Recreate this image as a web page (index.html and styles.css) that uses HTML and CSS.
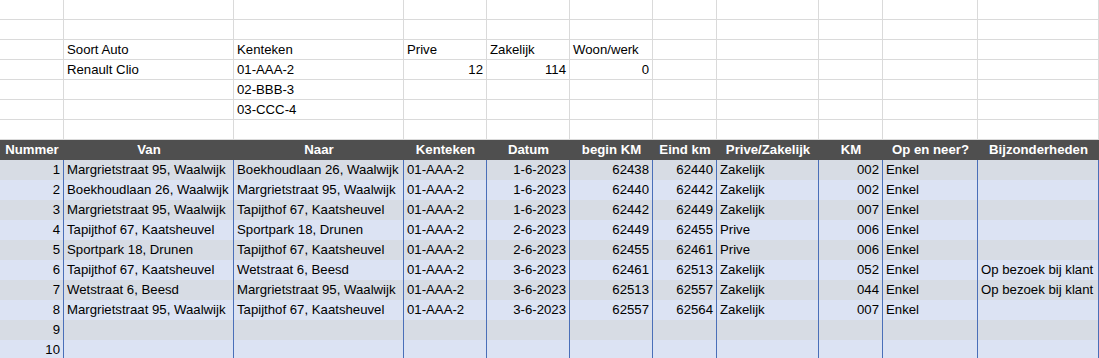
FILE: index.html
```html
<!DOCTYPE html>
<html lang="nl">
<head>
<meta charset="utf-8">
<title>Rittenregistratie</title>
<link rel="stylesheet" href="styles.css">
</head>
<body>
<div class="sheet">
  <div class="row grid"><div></div><div></div><div></div><div></div><div></div><div></div><div></div><div></div><div></div><div></div><div></div></div>
  <div class="row grid"><div></div><div></div><div></div><div></div><div></div><div></div><div></div><div></div><div></div><div></div><div></div></div>
  <div class="row grid"><div></div><div>Soort Auto</div><div>Kenteken</div><div>Prive</div><div>Zakelijk</div><div>Woon/werk</div><div></div><div></div><div></div><div></div><div></div></div>
  <div class="row grid"><div></div><div>Renault Clio</div><div>01-AAA-2</div><div class="num">12</div><div class="num">114</div><div class="num">0</div><div></div><div></div><div></div><div></div><div></div></div>
  <div class="row grid"><div></div><div></div><div>02-BBB-3</div><div></div><div></div><div></div><div></div><div></div><div></div><div></div><div></div></div>
  <div class="row grid"><div></div><div></div><div>03-CCC-4</div><div></div><div></div><div></div><div></div><div></div><div></div><div></div><div></div></div>
  <div class="row grid"><div></div><div></div><div></div><div></div><div></div><div></div><div></div><div></div><div></div><div></div><div></div></div>

  <div class="row head"><div>Nummer</div><div>Van</div><div>Naar</div><div>Kenteken</div><div>Datum</div><div>begin KM</div><div>Eind km</div><div>Prive/Zakelijk</div><div>KM</div><div>Op en neer?</div><div>Bijzonderheden</div></div>

  <div class="row data odd"><div class="num">1</div><div>Margrietstraat 95, Waalwijk</div><div>Boekhoudlaan 26, Waalwijk</div><div>01-AAA-2</div><div class="num">1-6-2023</div><div class="num">62438</div><div class="num">62440</div><div>Zakelijk</div><div class="num">002</div><div>Enkel</div><div></div></div>
  <div class="row data even"><div class="num">2</div><div>Boekhoudlaan 26, Waalwijk</div><div>Margrietstraat 95, Waalwijk</div><div>01-AAA-2</div><div class="num">1-6-2023</div><div class="num">62440</div><div class="num">62442</div><div>Zakelijk</div><div class="num">002</div><div>Enkel</div><div></div></div>
  <div class="row data odd"><div class="num">3</div><div>Margrietstraat 95, Waalwijk</div><div>Tapijthof 67, Kaatsheuvel</div><div>01-AAA-2</div><div class="num">1-6-2023</div><div class="num">62442</div><div class="num">62449</div><div>Zakelijk</div><div class="num">007</div><div>Enkel</div><div></div></div>
  <div class="row data even"><div class="num">4</div><div>Tapijthof 67, Kaatsheuvel</div><div>Sportpark 18, Drunen</div><div>01-AAA-2</div><div class="num">2-6-2023</div><div class="num">62449</div><div class="num">62455</div><div>Prive</div><div class="num">006</div><div>Enkel</div><div></div></div>
  <div class="row data odd"><div class="num">5</div><div>Sportpark 18, Drunen</div><div>Tapijthof 67, Kaatsheuvel</div><div>01-AAA-2</div><div class="num">2-6-2023</div><div class="num">62455</div><div class="num">62461</div><div>Prive</div><div class="num">006</div><div>Enkel</div><div></div></div>
  <div class="row data even"><div class="num">6</div><div>Tapijthof 67, Kaatsheuvel</div><div>Wetstraat 6, Beesd</div><div>01-AAA-2</div><div class="num">3-6-2023</div><div class="num">62461</div><div class="num">62513</div><div>Zakelijk</div><div class="num">052</div><div>Enkel</div><div>Op bezoek bij klant</div></div>
  <div class="row data odd"><div class="num">7</div><div>Wetstraat 6, Beesd</div><div>Margrietstraat 95, Waalwijk</div><div>01-AAA-2</div><div class="num">3-6-2023</div><div class="num">62513</div><div class="num">62557</div><div>Zakelijk</div><div class="num">044</div><div>Enkel</div><div>Op bezoek bij klant</div></div>
  <div class="row data even"><div class="num">8</div><div>Margrietstraat 95, Waalwijk</div><div>Tapijthof 67, Kaatsheuvel</div><div>01-AAA-2</div><div class="num">3-6-2023</div><div class="num">62557</div><div class="num">62564</div><div>Zakelijk</div><div class="num">007</div><div>Enkel</div><div></div></div>
  <div class="row data odd"><div class="num">9</div><div></div><div></div><div></div><div></div><div></div><div></div><div></div><div></div><div></div><div></div></div>
  <div class="row data even"><div class="num">10</div><div></div><div></div><div></div><div></div><div></div><div></div><div></div><div></div><div></div><div></div></div>
</div>
</body>
</html>
```
FILE: styles.css
```css
html, body {
  margin: 0;
  padding: 0;
  background: #ffffff;
}

.sheet {
  width: 1099px;
  font-family: "Liberation Sans", Arial, sans-serif;
  font-size: 13.2px;
  color: #000000;
}

.row {
  display: grid;
  grid-template-columns: 64px 170px 170px 83px 83px 83px 64px 102px 64px 95px 121px;
  height: 20px;
}

.row > div {
  box-sizing: border-box;
  height: 20px;
  line-height: 20px;
  padding: 0 3px 0 3px;
  white-space: nowrap;
  overflow: hidden;
}

.row > .num {
  text-align: right;
}

.grid > div {
  border-right: 1px solid #dadada;
  border-bottom: 1px solid #dadada;
}

.head {
  background: #4f4f4f;
}

.head > div {
  color: #ffffff;
  font-weight: bold;
  text-align: center;
  line-height: 20px;
  padding: 0;
}

.data > div {
  border-right: 1px solid #4a6fb8;
}

.odd {
  background: #d7dce4;
}

.even {
  background: #dce3f3;
}
```
